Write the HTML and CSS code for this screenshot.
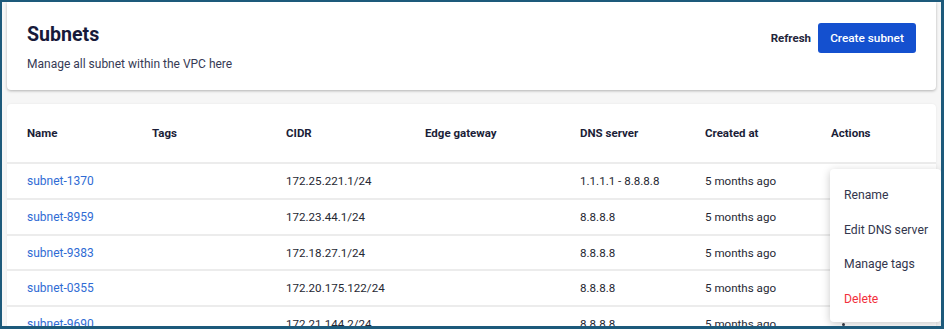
FILE: index.html
```html
<!DOCTYPE html>
<html lang="en">
<head>
    <meta charset="UTF-8"/>
    <title>Subnets</title>
    <link rel="stylesheet" href="styles.css">
</head>
<body>
    <div class="frame">
        <div class="page_head">
            <div class="head_text">
                <h1 class="title">Subnets</h1>
                <p class="subtitle">Manage all subnet within the VPC here</p>
            </div>
            <div class="head_actions">
                <span class="refresh">Refresh</span>
                <button class="btn_primary">Create subnet</button>
            </div>
        </div>

        <div class="table_card">
            <table class="subnets">
                <thead>
                    <tr>
                        <th class="c_name">Name</th>
                        <th class="c_tags">Tags</th>
                        <th class="c_cidr">CIDR</th>
                        <th class="c_edge">Edge gateway</th>
                        <th class="c_dns">DNS server</th>
                        <th class="c_created">Created at</th>
                        <th class="c_actions">Actions</th>
                    </tr>
                </thead>
                <tbody>
                    <tr>
                        <td class="c_name"><a href="#">subnet-1370</a></td>
                        <td></td>
                        <td>172.25.221.1/24</td>
                        <td></td>
                        <td>1.1.1.1 - 8.8.8.8</td>
                        <td>5 months ago</td>
                        <td class="c_actions"><span class="kebab"></span></td>
                    </tr>
                    <tr>
                        <td class="c_name"><a href="#">subnet-8959</a></td>
                        <td></td>
                        <td>172.23.44.1/24</td>
                        <td></td>
                        <td>8.8.8.8</td>
                        <td>5 months ago</td>
                        <td class="c_actions"><span class="kebab"></span></td>
                    </tr>
                    <tr>
                        <td class="c_name"><a href="#">subnet-9383</a></td>
                        <td></td>
                        <td>172.18.27.1/24</td>
                        <td></td>
                        <td>8.8.8.8</td>
                        <td>5 months ago</td>
                        <td class="c_actions"><span class="kebab"></span></td>
                    </tr>
                    <tr>
                        <td class="c_name"><a href="#">subnet-0355</a></td>
                        <td></td>
                        <td>172.20.175.122/24</td>
                        <td></td>
                        <td>8.8.8.8</td>
                        <td>5 months ago</td>
                        <td class="c_actions"><span class="kebab"></span></td>
                    </tr>
                    <tr>
                        <td class="c_name"><a href="#">subnet-9690</a></td>
                        <td></td>
                        <td>172.21.144.2/24</td>
                        <td></td>
                        <td>8.8.8.8</td>
                        <td>5 months ago</td>
                        <td class="c_actions"><span class="kebab"></span></td>
                    </tr>
                </tbody>
            </table>
        </div>

        <!-- row actions menu, opened on the first row -->
        <ul class="row_menu">
            <li>Rename</li>
            <li>Edit DNS server</li>
            <li>Manage tags</li>
            <li class="danger">Delete</li>
        </ul>
    </div>
</body>
</html>
```

FILE: styles.css
```css
html, body {
    margin: 0;
    padding: 0;
    background: #1d5a7b;
}

.frame {
    position: relative;
    width: 944px;
    height: 329px;
    box-sizing: border-box;
    border-style: solid;
    border-color: #1d5a7b;
    border-width: 2px 3px 3px 2px;
    background: #f6f6f6;
    overflow: hidden;
    padding: 0 5px;
    font-family: Roboto, "Noto Sans", sans-serif;
    color: #2b2d3a;
}

/* header card */
.page_head {
    display: flex;
    justify-content: space-between;
    align-items: flex-start;
    height: 88px;
    box-sizing: border-box;
    padding: 20px 20px 0 20px;
    background: #fff;
    border-radius: 0 0 4px 4px;
    box-shadow: 0 1px 3px rgba(0, 0, 0, 0.28);
}

.title {
    margin: 0;
    font-size: 19.6px;
    line-height: 25px;
    font-weight: 700;
    color: #171a3a;
}

.subtitle {
    margin: 9px 0 0 0;
    font-size: 12px;
    line-height: 16px;
    color: #363a55;
}

.head_actions {
    display: flex;
    align-items: center;
    gap: 7px;
    margin-top: 1px;
}

.refresh {
    font-size: 11.5px;
    font-weight: 700;
    color: #23253a;
}

.btn_primary {
    height: 30px;
    width: 98px;
    padding: 0;
    border: none;
    border-radius: 3px;
    background: #1450cf;
    color: #fff;
    font-family: Roboto, sans-serif;
    font-size: 11.8px;
    font-weight: 500;
}

/* table card */
.table_card {
    margin-top: 14px;
    background: #fff;
    border-radius: 4px 4px 0 0;
    box-shadow: 0 0 2px rgba(0, 0, 0, 0.08);
}

table.subnets {
    width: 100%;
    border-collapse: separate;
    border-spacing: 0;
    table-layout: fixed;
}

.subnets th, .subnets td {
    box-sizing: border-box;
    padding: 0;
    text-align: left;
    border-bottom: 2px solid #ececec;
    white-space: nowrap;
}

.subnets th {
    height: 60.3px;
    font-size: 11.5px;
    font-weight: 700;
    color: #1b1e38;
}

.subnets td {
    height: 35.7px;
    font-size: 11.6px;
    color: #262833;
}

.subnets td.c_name a {
    font-size: 12px;
    color: #2f6bd4;
    text-decoration: none;
}

.c_name { width: 145px; padding-left: 20px !important; }
.c_tags { width: 134px; }
.c_cidr { width: 139px; }
.c_edge { width: 155px; }
.c_dns { width: 125px; }
.c_created { width: 126px; }
.c_actions { width: 105px; }

.kebab {
    display: inline-block;
    width: 3px;
    height: 3px;
    margin-left: 11px;
    border-radius: 50%;
    background: #3a3c48;
    box-shadow: 0 -6px 0 #3a3c48, 0 6px 0 #3a3c48;
    vertical-align: middle;
}

/* dropdown */
.row_menu {
    position: absolute;
    left: 828px;
    top: 167px;
    width: 111px;
    margin: 0;
    padding: 9px 0 5px 0;
    list-style: none;
    background: #fff;
    border-radius: 4px;
    box-shadow: 0 2px 8px rgba(0, 0, 0, 0.22);
}

.row_menu li {
    height: 34.7px;
    line-height: 34.7px;
    padding-left: 14px;
    font-size: 12.2px;
    color: #33364d;
}

.row_menu li.danger {
    color: #f2303d;
}
```
